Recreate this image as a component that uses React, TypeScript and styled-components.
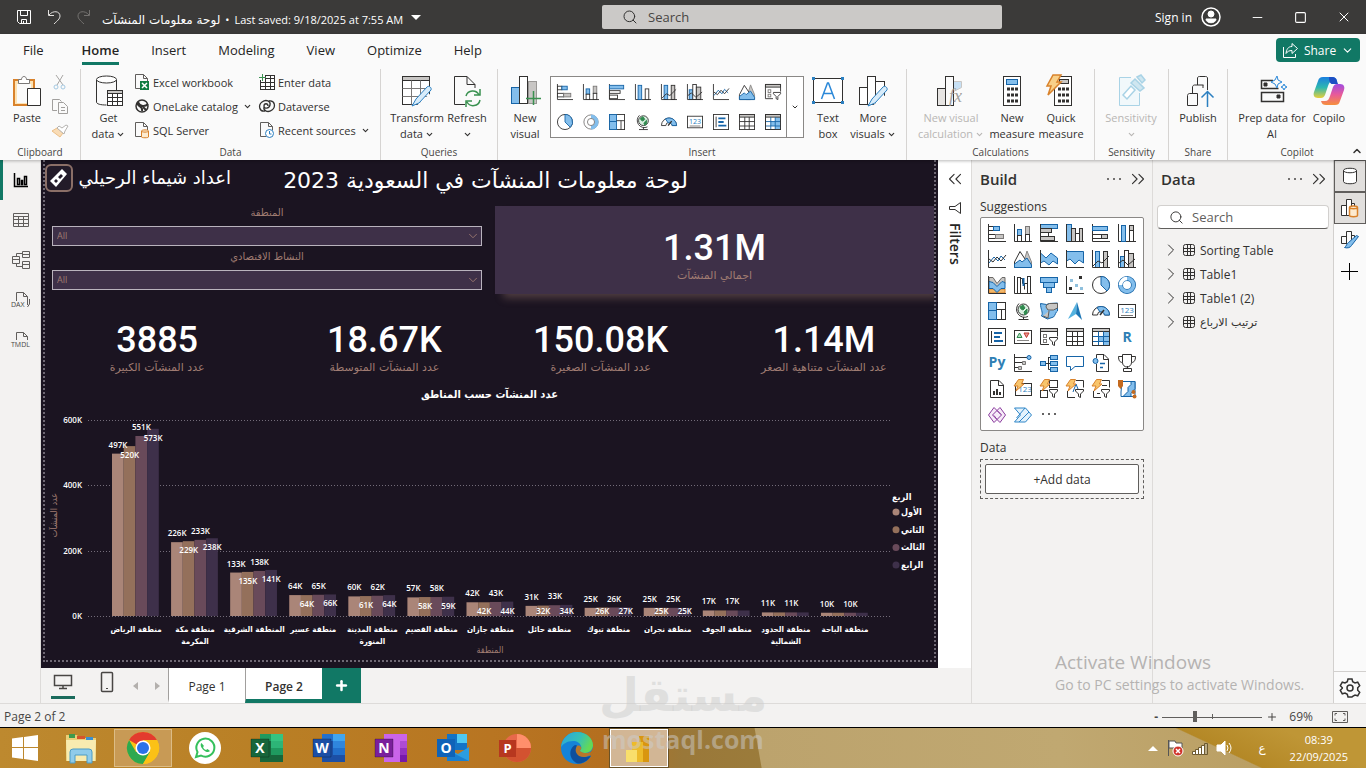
import React from 'react';
import styled, { createGlobalStyle, css } from 'styled-components';
import {
  ChevronDown, ChevronRight, ChevronUp, ChevronsLeft, ChevronsRight, Minus, Plus, Search, Square, X,
} from 'lucide-react';

const SANS = '"Open Sans", "Noto Sans", "DejaVu Sans", sans-serif';
const ARABIC = '"DejaVu Sans", "Open Sans", sans-serif';
const NARROW = '"DejaVu Sans Condensed", "DejaVu Sans", sans-serif';
const INK = '#323130';
const TEAL = '#117865';
const SKY = '#83beec';
const BLUE = '#1664a7';
const GREY = '#c8c6c4';
const ORANGE = '#d9822b';
const ROSE = '#a07c72';

const Global = createGlobalStyle`
  *, *::before, *::after { box-sizing: border-box; }
  body { margin: 0; background: #f3f2f1; font-family: ${SANS}; font-size: 12px; color: ${INK}; overflow-x: hidden; }
  button, input, select { font: inherit; color: inherit; margin: 0; }
  button { border: 0; padding: 0; background: none; }
  svg { display: block; flex: none; overflow: visible; }
  h1, h2, p, figure, ul { margin: 0; padding: 0; font-weight: 400; }
`;

/* ---------- icon drawing ---------- */

type Glyph = React.ReactElement;

const box = (x: number, y: number, w: number, h: number, fill = 'none', stroke = INK) => (
  <rect x={x} y={y} width={w} height={h} fill={fill} stroke={stroke} />
);
const axis = <path d="M.5 0v17.5H18" />;
const bolt = <path d="M4.5-.5h5L7.5 4H10L2 11l2-5H0z" fill="#f8c56c" stroke={ORANGE} />;
const funnelMark = <path d="M9.500 9.500h8v1.500L14.500 14v3.500l-2-1V14l-3-3z" fill="#fff" />;

const viz: Record<string, Glyph> = {
  stackedBar: <>{axis}{box(.5, 2.5, 5, 4, '#fff')}{box(5.5, 2.5, 6, 4, SKY, BLUE)}{box(.5, 10.5, 7, 4, '#fff')}{box(7.5, 10.5, 8, 4, GREY, '#7a7877')}</>,
  stackedCol: <>{axis}{box(3.5, 5.5, 4, 6, SKY, BLUE)}{box(3.5, 11.5, 4, 6, '#fff')}{box(11.5, 2.5, 4, 8, GREY, '#7a7877')}{box(11.5, 10.5, 4, 7, '#fff')}</>,
  wideBar: <>{box(.5, .5, 17, 4, SKY, BLUE)}{box(.5, 4.5, 11, 4, GREY)}{box(.5, 8.5, 8, 4, '#fff')}{box(.5, 12.5, 14, 4, GREY)}{axis}</>,
  wideCol: <>{box(.5, .5, 5, 17, SKY, BLUE)}{box(5.5, 4.5, 4, 13, GREY)}{box(9.5, 9.5, 4, 8, '#fff')}{box(13.5, 4.5, 3, 13, GREY)}{axis}</>,
  bar: <>{axis}{box(.5, 1.5, 16, 4, SKY, BLUE)}{box(.5, 7.5, 12, 3, '#fff')}{box(.5, 12.5, 9, 4, '#fff')}</>,
  col: <>{axis}{box(3.5, 1.5, 4, 16, SKY, BLUE)}{box(11.5, 5.5, 4, 12, '#fff')}</>,
  bar100: <>{axis}{box(.5, 2.5, 15, 4, SKY, BLUE)}{box(.5, 10.5, 9, 4, '#fff')}{box(9.5, 10.5, 6, 4, GREY)}</>,
  col100: <>{axis}{box(3.5, 1.5, 4, 16, SKY, BLUE)}{box(11.5, 1.5, 4, 5, GREY)}{box(11.5, 6.5, 4, 11, '#fff')}</>,
  line: <>{axis}<path d="M1 13l5-6 4 4 3-5 4 4" stroke={BLUE} /><path d="M1 9l4 3 4-5 4 4 5-6" /></>,
  area: <><path d="M13 1l4.500 11v5.500H8z" fill={GREY} stroke="#8a8886" /><path d="M.5 12L6 1.500 13 12v5.500H.5z" fill="#fff" /><path d="M.5 17.500V14L6 10l2 2 5-4 4.500 7v2.500z" fill={SKY} stroke={BLUE} /></>,
  stackedArea: <><path d="M.5 3L6 8l5-5 6.500 5v6l-4.500-3-4 4-5-4-3.500 2z" fill={SKY} stroke={BLUE} />{axis}</>,
  area100: <><path d="M.5 1.500h17V13L13 10l-4 4-5-5-3.500 2z" fill={SKY} stroke={BLUE} />{axis}</>,
  lineStackCol: <>{box(3.5, 1.5, 4, 16, SKY, BLUE)}{box(11.5, 1.5, 4, 16, GREY)}<path d="M1 16l5-5 4 2 7-7" />{axis}</>,
  lineClCol: <>{box(2.5, 6.5, 4, 11, SKY, BLUE)}{box(6.5, .5, 4, 17, '#fff')}{box(10.5, 3.5, 5, 14, GREY)}<path d="M1 13l4-3 5 5 7-6" />{axis}</>,
  ribbon: <><path d="M1 13h16v4H1z" fill="#f2b76a" stroke={ORANGE} /><path d="M1 1.500h4l4 6 5-6h3v6l-4 2-4 4-4-2-4-4z" fill={GREY} stroke="#6b6967" /><path d="M1 5.500l4 1 4 4 5-5 3 1v6h-4l-4 4-4-4H1z" fill={SKY} stroke={BLUE} />{axis}</>,
  waterfall: <>{axis}{box(3.5, 1.5, 3, 16, '#fff')}<path d="M6.500 2.500h2v5M8.500 7.500h5M13.500 7.500v10M10.500 7.500v6" />{box(13.5, .5, 3, 17, '#fff')}<path d="M9.500 2v8" stroke={BLUE} strokeWidth="2" /></>,
  funnel: <>{box(.5, 1.5, 17, 5, SKY, BLUE)}{box(3.5, 6.5, 11, 5, SKY, BLUE)}{box(6.5, 11.5, 5, 5, SKY, BLUE)}</>,
  scatter: <>{axis}<g stroke="none"><path d="M4 3h3v3H4zM9 8h3v3H9zM14 11h3v3h-3z" fill="#8fc0dd" /><path d="M13 0h3v3h-3zM3 11h3v3H3z" fill={INK} /></g></>,
  pie: <><circle cx="9" cy="9" r="8.500" fill="#fff" /><path d="M9 .5a8.500 8.500 0 0 1 6 14.500L9 9z" fill={SKY} stroke={BLUE} /></>,
  donut: <><circle cx="9" cy="9" r="6.500" stroke={BLUE} strokeWidth="5" /><circle cx="9" cy="9" r="6.500" stroke={SKY} strokeWidth="3.500" /><path d="M9 2.500A6.500 6.500 0 0 0 2.500 9" stroke="#fff" strokeWidth="3.500" /></>,
  thinDonut: <><circle cx="9" cy="9" r="8" stroke="#7a7877" fill="#fff" /><path d="M9 3a6 6 0 0 1 0 12" stroke={SKY} strokeWidth="5" /><circle cx="9" cy="9" r="4" stroke="#7a7877" fill="#fff" /></>,
  treemap: <>{box(.5, .5, 17, 17, '#fff')}{box(.5, .5, 8, 8, SKY, BLUE)}{box(.5, 8.5, 8, 9, SKY, BLUE)}<path d="M8.500 7.500h9M13.500 7.500v10" /></>,
  map: <><circle cx="9.500" cy="7.500" r="5.500" fill="#d9efe0" /><path d="M6 5l3-2 2 3-2 2-2-1zM10 10l3-3v4l-2 2z" fill="#2f8a4e" stroke="#2f8a4e" /><path d="M5 1.500a8 8 0 0 0 9 13M9.500 15v2.500M4.500 17.500h10" /></>,
  filledMap: <><path d="M.5 1.500l6 1 3-1 8-.5v8c-2 1-2 4-4 6l-6 2-6-3c2-4-1-6-1-12.500z" fill={SKY} stroke={BLUE} /><path d="M6.500 3l3-1.500h8V6l-4 2H8L6 5zM9 9l-1 7-5-2" fill={GREY} stroke="#605e5c" /></>,
  arrow: <g stroke="none"><path d="M11 0L2 17l8-5z" fill="#54b2df" /><path d="M11 0l5 18-6-6z" fill="#1c76b5" /></g>,
  gauge: <><path d="M.5 13a8.500 8.500 0 0 1 17 0h-5a3.500 3.500 0 0 0-7 0z" fill="#fff" /><path d="M5 5.500A8.500 8.500 0 0 1 17.500 13h-5A3.500 3.500 0 0 0 8 10z" fill={SKY} stroke={BLUE} /><path d="M8 13l4-5" strokeWidth="1.500" /></>,
  card: <>{box(.5, 2.5, 17, 13, '#fff')}<text x="9" y="11" textAnchor="middle" fontSize="8" stroke="none" fill="#2b7fc0">123</text><path d="M3 13.500h12" stroke="#7a7877" /></>,
  multiRow: <>{box(.5, .5, 17, 17, '#fff')}<path d="M3.500 3v12" /><path d="M6 5h8M6 9h6M6 13h9" stroke={BLUE} strokeWidth="2" /></>,
  kpi: <>{box(.5, 2.5, 17, 13, '#fff')}<path d="M3 9.500L5.500 5 8 9.500z" fill="#b5dfc0" stroke="#2f8a4e" /><path d="M10 5h5l-2.500 4.500z" fill="#e89a9a" stroke="#c0392b" /><path d="M3 12.500h12" stroke="#8a8886" /></>,
  slicer: <><path d="M9 16.500H.5V.5h17v8" fill="#fff" />{box(.5, .5, 17, 3, GREY)}{box(3.5, 6.5, 3, 3, '#fff', '#7a7877')}{box(3.5, 11.5, 3, 3, '#fff', '#7a7877')}{funnelMark}</>,
  table: <>{box(.5, .5, 17, 17, '#fff')}{box(.5, .5, 17, 3, GREY)}<path d="M.5 8.500h17M.5 13.500h17M6.500 3.500v14M11.500 3.500v14" /></>,
  matrix: <>{box(.5, .5, 17, 17, '#fff')}<path d="M6.500 8.500h11v9h-6v-4h-5z" fill={SKY} stroke="none" /><path d="M11.500 3.500h6v5h-6z" fill={SKY} stroke="none" />{box(.5, .5, 17, 3, GREY)}<path d="M.5 8.500h17M.5 13.500h17M6.500 3.500v14M11.500 3.500v14" stroke={BLUE} />{box(.5, .5, 17, 17)}</>,
  r: <text x="9" y="14" textAnchor="middle" fontSize="14" fontWeight="700" stroke="none" fill="#2f7fb5">R</text>,
  py: <text x="9" y="13" textAnchor="middle" fontSize="14" fontWeight="700" stroke="none" fill="#2f7fb5">Py</text>,
  influencers: <>{axis}<path d="M1 3.500h12M1 8.500h8M1 13.500h4" /><circle cx="15" cy="3.500" r="2" fill={SKY} stroke={BLUE} /><path d="M8.500 7.500h3v3h-3zM4.500 12.500h3v3h-3z" fill={GREY} stroke="#7a7877" /></>,
  decomposition: <><path d="M5.500 9.500h5M8.500 3v12.500M8.500 3.500h2M8.500 15.500h2" />{box(.5, 7.5, 5, 4, SKY, BLUE)}{box(10.5, 1.5, 7, 4, SKY, BLUE)}{box(10.5, 7.5, 7, 4, SKY, BLUE)}{box(10.5, 13.5, 7, 4, SKY, BLUE)}</>,
  qna: <path d="M.5 2.500h17v10H9L4.500 16.500v-4h-4z" fill="#fff" stroke={BLUE} />,
  narrative: <><path d="M4.500 4V.5H12l4.500 4.500v12.500h-12V10M11.500.5v5h5" /><circle cx="3.500" cy="7" r="2.500" fill={SKY} stroke={BLUE} /><path d="M8 9.500h5M8 13.500h3" stroke={BLUE} strokeWidth="1.500" /></>,
  trophy: <path d="M4.500.5h9v8a4 4 0 0 1-9 0zM4.500 2.500h-4c0 4 1.500 6 4 6M13.500 2.500h4c0 4-1.500 6-4 6M9.500 12v3M5.500 17.500v-3h8v3z" fill="#fff" />,
  paginated: <><path d="M2.500.5H11l4.500 4.500v12.500h-13zM10.500.5v5h5" fill="#fff" /><path d="M6 15v-4M9 15V9M12 15v-3" strokeWidth="2" /></>,
  cardBolt: <>{box(1.5, 3.5, 16, 12, '#fff')}<text x="11" y="12" textAnchor="middle" fontSize="8" stroke="none" fill="#2b7fc0">123</text>{bolt}</>,
  slicerBolt: <>{box(9.5, .5, 8, 7)}{box(.5, 10.5, 7, 7)}{bolt}{funnelMark}</>,
  textBolt: <><path d="M10 .5h7.500v7M1.500 11v6.500H9" /><path d="M7 12l3-8 2 5" stroke={BLUE} />{bolt}{funnelMark}</>,
  listBolt: <><path d="M10 .5h7.500v7M1.500 11v6.500H9M10 5.500h5M5 13.500h3" />{bolt}{funnelMark}</>,
  arcgis: <><path d="M4 1.500h13v15H3V12z" fill="#fff" stroke={BLUE} /><path d="M17 1.500h-4v3l-3 3v4l-5 5h8v-3l4-5z" fill={SKY} stroke={BLUE} /><g fill="#c46a1f" stroke="none"><path d="M0 0h5v6L2.500 9 0 6z" /><circle cx="15.500" cy="12" r="2" /><circle cx="16.500" cy="16.500" r="2" /></g></>,
  powerApps: <g stroke="#8a3b9e"><path d="M6 1.500L9 4.500l3-3L17.500 9 12 16.500 9 13.500l-3 3L.5 9z" fill="#f6ebf8" /><path d="M9 4.500L4.500 9 9 13.500 13.500 9zM9 4.500l4 4M9 13.500l-3-4" /></g>,
  powerAutomate: <g stroke="#2f86c8"><path d="M.5 2h11l6 7-6 7H.5l6-7z" fill="#e3f2fc" /><path d="M11 2L2.500 12M15 6L5 16" /></g>,
  more: <g fill={INK} stroke="none"><circle cx="3" cy="8" r="1" /><circle cx="9" cy="8" r="1" /><circle cx="15" cy="8" r="1" /></g>,
};

const VizIcon = ({ name, size = 18 }: { name: string; size?: number }) => (
  <svg width={size} height={size} viewBox="0 0 18 18" fill="none" stroke={INK} aria-hidden="true">{viz[name]}</svg>
);

const Ico = ({ w, h = w, children, stroke = INK }: { w: number; h?: number; children: React.ReactNode; stroke?: string }) => (
  <svg width={w} height={h} viewBox={`0 0 ${w} ${h}`} fill="none" stroke={stroke} aria-hidden="true">{children}</svg>
);

const pencil = <path d="M15 24l-4 7 7-3L30 15c1-2-2-5-4-3z" fill="#d8ecfa" stroke="#2b7fc0" />;

const keypad = (x: number) => [14, 20, 26].map(y => (
  <path key={y} d={`M${x} ${y - 1.5}h3v3h-3zM${x + 4} ${y - 1.5}h3v3h-3zM${x + 8} ${y - 1.5}h3v3h-3z`} fill={INK} stroke="none" />
));

const big: Record<string, Glyph> = {
  paste: <Ico w={32}><path d="M3 5h20v25H3z" fill="#fde3b4" stroke={ORANGE} strokeWidth="2" /><path d="M6 9h14v19H6z" fill="#fafafa" stroke="none" /><path d="M7.500 8.500v-4h3c0-4 5-4 5 0h3v4z" fill="#fff" stroke="#7a7877" /><path d="M16.500 13.500h13v17h-13z" fill="#fff" /></Ico>,
  getData: <Ico w={32}><path d="M3.500 5v22c0 2 4 3 10 3" fill="none" /><path d="M23.500 5v10" /><ellipse cx="13.500" cy="4.500" rx="10" ry="3.500" fill="#fff" />{box(14.5, 15.5, 15, 15, '#fff')}{box(14.5, 15.5, 15, 3, GREY)}<path d="M14.500 22.500h15M14.500 26.500h15M19.500 18.500v12M24.500 18.500v12" /></Ico>,
  transform: <Ico w={32}>{box(1.5, 1.5, 27, 28, '#fff')}{box(1.5, 1.5, 27, 4, GREY)}<path d="M1.500 13.500h27M1.500 21.500h27M10.500 5.500v24M19.500 5.500v24" stroke="#7a7877" /><path d="M14 32L31 17V32z" fill="#fafafa" stroke="none" />{pencil}</Ico>,
  refresh: <Ico w={32}><path d="M14 29.500H3.500v-28H16l8 8V13M16 1.500v8h8" /><g stroke="#3a9150" strokeWidth="1.500"><path d="M15 21a7 7 0 0 1 13-1M29 14v6h-6M29 25a7 7 0 0 1-13 2M15 32v-6h6" /></g></Ico>,
  newVisual: <Ico w={32}>{box(2.5, 12.5, 8, 16, SKY, BLUE)}{box(19.5, 6.5, 8, 22, GREY, '#9a9896')}{box(10.5, 1.5, 8, 27, '#fff')}<path d="M24.500 16v14M17 23.500h15" stroke="#3a9150" strokeWidth="1.500" /></Ico>,
  textBox: <Ico w={32}>{box(1.5, 3.5, 29, 24, '#fff')}<path d="M9.500 24l6-16h1l6 16M11.500 18.500h9" stroke="#2b88d8" strokeWidth="1.500" /><path d="M0 2h3v3H0zM29 2h3v3h-3zM0 26h3v3H0zM29 26h3v3h-3z" fill="#2b7fc0" stroke="none" /></Ico>,
  moreVisuals: <Ico w={32}>{box(2.5, 12.5, 8, 17, '#fff')}{box(18.5, 6.5, 9, 23, '#fff')}{box(10.5, 1.5, 8, 28, '#fff')}<path d="M14 32L32 17V32z" fill="#fafafa" stroke="none" />{pencil}</Ico>,
  visualCalc: <Ico w={32} stroke="#c8c6c4">{box(2.5, 13.5, 8, 17, '#e6e4e2')}<path d="M18.500 6.500h8v6l-8 4z" fill="#c7e0f4" />{box(10.5, 1.5, 8, 29, '#fafafa')}<text x="14" y="27" fontSize="18" fontStyle="italic" fontFamily="Liberation Serif" stroke="none" fill="#a19f9d">fx</text></Ico>,
  measure: <Ico w={32}>{box(7.5, 1.5, 17, 29, '#fff')}{box(10.5, 4.5, 11, 5, SKY, BLUE)}{keypad(11)}</Ico>,
  quick: <Ico w={32}>{box(9.5, 1.5, 17, 29, '#fff')}{box(14.5, 4.5, 9, 4, GREY)}{keypad(13)}<path d="M8 0h8l-4 7h4L3 20l3-9H2z" fill="#f8d089" stroke={ORANGE} strokeWidth="1.500" /></Ico>,
  sensitivity: <Ico w={32} stroke="#a9d3e6"><path d="M16 2.500H4.500v28h20V18" fill="#f1f8fb" /><path d="M8 20l8-9 4 4-8 9z" fill="#fff" strokeWidth="1.500" /><path d="M16 8l4-4 9 9-4 3zM22 2l4-2 4 5-3 3z" fill="#cfe6f0" strokeWidth="1.500" /></Ico>,
  publish: <Ico w={32}><path d="M15 30.500H5.500v-10c0-1 1-2 2-2h8v12M10.500 18v-6c0-1 1-2 2-2h9M15.500 10V3c0-1 1-1.500 2-1.500h6c1 0 2 .5 2 1.500v12M21 13v-3" /><path d="M25.500 32V16.500M19.500 22.500l6-6 6 6" stroke="#2b7fc0" strokeWidth="1.500" /></Ico>,
  prep: <Ico w={32}><path d="M17 5.500H5.500v8h17M27.500 17.500h-22v9h22z" strokeWidth="1.500" /><path d="M8 8h3v3H8zM21 20h3v3h-3z" fill={INK} /><path d="M21 1l1 4 4 2-4 2-1 4-2-4-4-2 4-2z" fill="#fafafa" stroke="#2b88d8" /><path d="M28 9l1 2 2 1-2 1-1 2-1-2-2-1 2-1z" stroke="#2b88d8" /></Ico>,
  copilot: (
    <svg width="32" height="32" viewBox="0 0 32 32" aria-hidden="true">
      <defs>
        <linearGradient id="cpA" x1="0" y1="0" x2="0" y2="1"><stop offset="0" stopColor="#1b7fe0" /><stop offset=".5" stopColor="#2db8b0" /><stop offset="1" stopColor="#e8cf3a" /></linearGradient>
        <linearGradient id="cpB" x1="0" y1="0" x2="0" y2="1"><stop offset="0" stopColor="#a04be0" /><stop offset=".5" stopColor="#e85a9a" /><stop offset="1" stopColor="#f6903c" /></linearGradient>
      </defs>
      <path d="M10 2h9c3 0 4 1 5 4h-4c-3 0-4 2-5 5l-3 9c-1 2-2 3-4 3H5c-4 0-5-3-4-6l4-11c1-3 2-4 5-4z" fill="url(#cpA)" />
      <path d="M22 30h-9c-3 0-4-1-5-4h4c3 0 4-2 5-5l3-9c1-2 2-3 4-3h3c4 0 5 3 4 6l-4 11c-1 3-2 4-5 4z" fill="url(#cpB)" />
      <path d="M16 2h3c3 0 4 1 5 4l1 3h-6c-1 0-3-1-3-7z" fill="#1c4fc4" />
    </svg>
  ),
};

const sheet = <path d="M7 14.500H1.500V.5h8l4 4V8M9.500.5v4h4" stroke="#605e5c" />;
const small: Record<string, Glyph> = {
  excel: <Ico w={16}>{sheet}<path d="M6 7h9v9H6z" fill="#107c41" stroke="none" /><path d="M8 9l5 5M13 9l-5 5" stroke="#fff" strokeWidth="1.500" /></Ico>,
  onelake: <Ico w={16}><circle cx="8" cy="8" r="6" strokeWidth="1.500" /><path d="M3 5c2 5 6 3 5 8M4 4c2 5 7 5 10 2M9 9l3 3" strokeWidth="2" /></Ico>,
  sql: <Ico w={16}>{sheet}<path d="M7.500 9v6c0 1 7 1 7 0V9c0-1.500-7-1.500-7 0zc0 1.500 7 1.500 7 0" fill="#fdebd0" stroke={ORANGE} /></Ico>,
  enter: <Ico w={16}>{box(1.5, 1.5, 14, 14, '#fff')}<path d="M1.500 4.500h14M1.500 8.500h14M1.500 12.500h14M6.500 1.500v14M11.500 1.500v14" /><path d="M0 0h6v6H0z" fill="#fafafa" stroke="none" /><path d="M3.500 0v7M0 3.500h7" stroke="#3a9150" /></Ico>,
  dataverse: <Ico w={16}><path d="M6 13c-6 1-7-6-3-9s9-1 8 3-6 4-6 1 4-3 4 0M10 3c6-1 7 6 3 9s-9 1-8-3" strokeWidth="1.300" /></Ico>,
  recent: <Ico w={16}>{sheet}<circle cx="10.500" cy="11.500" r="4" fill="#fff" stroke="#2b7fc0" /><path d="M10.500 9v3h2" stroke="#2b7fc0" /></Ico>,
  cut: <Ico w={16} stroke="#a8a6a4"><path d="M4 1l7 10M11 1L5 11" /><circle cx="4" cy="13" r="2" stroke="#a5c9e2" /><circle cx="11" cy="13" r="2" stroke="#a5c9e2" /></Ico>,
  copy: <Ico w={16} stroke="#a19f9d"><path d="M5 12.500H.5v-11h7l2 2M6.500 4.500h5l4 4v7h-9zM9 9.500h4M9 12.500h4" /></Ico>,
  painter: <Ico w={16} stroke="#b5b3b0"><path d="M0 9l8 6 3-4-6-5z" fill="#f9dcb6" stroke="#ecbf87" /><path d="M5 6l7 6 1-3 3-5-2-1-4 3-3-2z" fill="#fff" /></Ico>,
};

/* ---------- title bar ---------- */

const Shell = styled.div`min-height: 100vh; display: flex; flex-direction: column; position: relative;`;

const TitleBar = styled.header`
  height: 34px; background: #3b3a39; color: #fff;
  display: grid; grid-template-columns: 602fr 400fr 364fr; align-items: center;
`;
const TitleLeft = styled.div`display: flex; align-items: center; gap: 14px; padding-left: 16px; white-space: nowrap;`;
const DocName = styled.button`
  display: flex; align-items: center; gap: 5px; font-size: 11px; line-height: 16px; padding-top: 6px; margin-left: -4px;
  bdi { font-family: ${ARABIC}; font-size: 12px; }
`;
const Caret = styled.span`border: 5px solid transparent; border-top-color: #fff; border-bottom: 0; margin-left: 3px; margin-top: -6px;`;
const TopSearch = styled.label`
  height: 24px; background: #cbc9c7; color: ${INK}; display: flex; align-items: center; gap: 8px; padding-left: 20px; border-radius: 2px;
  input { flex: 1; min-width: 0; border: 0; outline: 0; background: none; font-size: 13px; }
  input::placeholder { color: #484644; opacity: 1; }
`;
const TitleRight = styled.div`
  display: flex; align-items: center; justify-content: flex-end; padding-right: 14px; font-size: 12px;
  button { display: flex; align-items: center; gap: 9px; white-space: nowrap; }
  button + button { margin-left: 29px; }
`;
const IconButton = styled.button`display: flex; align-items: center; justify-content: center;`;

/* ---------- ribbon ---------- */

const Ribbon = styled.section`background: #fafafa; position: relative; z-index: 2; box-shadow: 0 1px 3px rgba(0, 0, 0, .28);`;
const TabRow = styled.nav`height: 32px; display: flex; align-items: center; padding: 0 6px 0 7px;`;
const Tab = styled.button<{ $on?: boolean }>`
  height: 32px; padding: 0 16px; font-size: 13px; display: flex; align-items: center; color: #252423;
  ${p => p.$on && css`font-weight: 600; margin-left: 6px;`}
  span { border-bottom: 3px solid ${p => (p.$on ? TEAL : 'transparent')}; line-height: 24px; margin-top: 2px; }
`;
const ShareButton = styled.button`
  margin-left: auto; width: 84px; height: 24px; background: ${TEAL}; color: #fff; border-radius: 4px;
  display: flex; align-items: center; justify-content: center; gap: 5px; font-size: 12px;
`;
const Groups = styled.div`display: flex; height: 94px; padding-top: 3px;`;
const Group = styled.div<{ $w?: number }>`
  ${p => (p.$w ? `flex: 0 0 ${p.$w}px;` : 'flex: 1 0 0; min-width: 0;')}
  display: flex; flex-direction: column; border-right: 1px solid #d6d4d2; position: relative;
  &:last-child { border-right: 0; }
`;
const GroupBody = styled.div<{ $pad?: number }>`display: flex; height: 76px; padding: 1px 0 0 ${p => p.$pad || 0}px; align-items: flex-start;`;
const GroupName = styled.div`text-align: center; font-size: 10px; line-height: 16px; color: #484644;`;
const Tool = styled.button<{ $w: number; $off?: boolean }>`
  flex: 0 0 ${p => p.$w}px; padding-top: 5px; display: flex; flex-direction: column; align-items: center;
  font-size: 11px; line-height: 16px; color: ${p => (p.$off ? '#b8b6b4' : INK)}; white-space: nowrap;
  svg + span { margin-top: 3px; }
  span { display: flex; align-items: center; gap: 2px; min-height: 16px; }
`;
const ToolColumn = styled.div<{ $w?: number }>`display: flex; flex-direction: column; width: ${p => p.$w || 20}px;`;
const RowTool = styled.button`
  height: 24px; display: flex; align-items: center; gap: 3px; font-size: 11px; color: ${INK}; white-space: nowrap;
  svg:last-child:not(:first-child) { margin-left: 2px; }
`;
const Gallery = styled.div`
  display: flex; border: 1px solid #8a8886; background: #fff; margin: 6px 8px 0 7px; height: 62px; width: 254px;
`;
const GalleryGrid = styled.div`flex: 1; display: grid; grid-template-columns: repeat(9, 1fr); grid-template-rows: 30px 30px; padding-left: 1px;`;
const GalleryMore = styled(IconButton)`width: 17px; border-left: 1px solid #8a8886;`;
const Collapse = styled(IconButton)`position: absolute; right: 3px; bottom: 3px;`;

type ToolDef = { icon: string; a: string; b?: string; w: number; off?: boolean; arrow?: boolean };
const BigTool = ({ icon, a, b, w, off, arrow }: ToolDef) => (
  <Tool $w={w} $off={off} disabled={off}>
    {big[icon]}
    <span>{a}</span>
    {(b || arrow) && <span>{b}{arrow && <ChevronDown size={9} strokeWidth={3} />}</span>}
  </Tool>
);
const SmallTool = ({ icon, text, arrow }: { icon: string; text: string; arrow?: boolean }) => (
  <RowTool>{small[icon]}{text}{arrow && <ChevronDown size={9} strokeWidth={3} />}</RowTool>
);

const ribbonGallery = [
  'stackedBar', 'stackedCol', 'bar', 'col', 'lineStackCol', 'lineClCol', 'line', 'area', 'slicer',
  'pie', 'thinDonut', 'treemap', 'map', 'gauge', 'card', 'multiRow', 'table', 'matrix',
];

/* ---------- work area ---------- */

const Work = styled.main`flex: 1; display: flex; min-height: 543px;`;
const LeftRail = styled.nav`width: 41px; flex: none; background: #f3f2f1; border-right: 1px solid #dddbd9; display: flex; flex-direction: column;`;
const RailButton = styled.button<{ $on?: boolean }>`
  height: 40px; display: flex; align-items: center; justify-content: center;
  border-left: 3px solid ${p => (p.$on ? TEAL : 'transparent')}; padding-right: 2px;
`;
const Stage = styled.div`flex: 1; min-width: 0; display: flex; flex-direction: column;`;
const StageTop = styled.div`flex: 1; display: flex;`;
const Canvas = styled.section`flex: 1; min-width: 0; background: #1b1421; padding: 0 2px 6px;`;
const Report = styled.div`border: 2px dotted #6f6874; border-top: 0; height: 100%; overflow: hidden; color: #fff; font-family: ${ARABIC};`;

const ReportHead = styled.div`height: 46px; padding: 4px 0 0; display: grid; grid-template-columns: 36px 150px 457px 1fr;`;
const Badge = styled.div`
  width: 28px; height: 28px; border: 2px solid #8b6f67; border-radius: 6px; background: #231b29; display: grid; place-items: center;
`;
const Author = styled.p`font-size: 18px; line-height: 28px; white-space: nowrap;`;
const ReportTitle = styled.h1`font-size: 22px; line-height: 34px; white-space: nowrap;`;

const TopBand = styled.div`display: grid; grid-template-columns: 430fr 439fr; column-gap: 13px; padding-left: 7px;`;
const Slicers = styled.div`display: flex; flex-direction: column; gap: 4px;`;
const Slicer = styled.label`
  display: block; position: relative; text-align: center; color: ${ROSE}; font-size: 10px; line-height: 14px;
  select {
    appearance: none; display: block; width: 100%; height: 20px; margin-top: 6px; padding: 0 4px; border: 1px solid #b9b3bd; border-radius: 0;
    background: #3e3048; color: ${ROSE}; font-family: ${SANS}; font-size: 9px;
  }
  svg { position: absolute; right: 2px; bottom: 3px; }
`;
const Total = styled.div`background: #3e3048; height: 88px; padding-top: 22px; box-shadow: 6px 6px 8px -2px rgba(160, 124, 114, .4);`;
const Figure = styled.div`
  text-align: center; font-size: 11px; line-height: 16px; color: ${ROSE};
  strong { display: block; font-family: Roboto, sans-serif; font-weight: 500; font-size: 36px; line-height: 40px; color: #fff; }
`;
const Figures = styled.div`display: grid; grid-template-columns: 224fr 206fr 202fr 220fr; column-gap: 12px; margin-top: 26px;`;
const ChartBox = styled.figure`
  margin-top: 9px;
  figcaption { text-align: center; font-family: ${NARROW}; font-size: 11px; line-height: 20px; font-weight: 700; }
  svg { width: 100%; height: auto; }
`;

const SERIES = ['#aa8578', '#94705b', '#694a5a', '#3e304a'];
const QUARTERS = ['الأول', 'الثاني', 'الثالث', 'الرابع'];
const REGIONS: { name: string[]; v: number[] }[] = [
  { name: ['منطقة الرياض'], v: [497, 520, 551, 573] },
  { name: ['منطقة مكة', 'المكرمة'], v: [226, 229, 233, 238] },
  { name: ['المنطقة الشرقية'], v: [133, 135, 138, 141] },
  { name: ['منطقة عسير'], v: [64, 64, 65, 66] },
  { name: ['منطقة المدينة', 'المنورة'], v: [60, 61, 62, 64] },
  { name: ['منطقة القصيم'], v: [57, 58, 58, 59] },
  { name: ['منطقة جازان'], v: [42, 42, 43, 44] },
  { name: ['منطقة حائل'], v: [31, 32, 33, 34] },
  { name: ['منطقة تبوك'], v: [25, 26, 26, 27] },
  { name: ['منطقة نجران'], v: [25, 25, 25, 25] },
  { name: ['منطقة الجوف'], v: [17, 17, 17, 17] },
  { name: ['منطقة الحدود', 'الشمالية'], v: [11, 11, 11, 11] },
  { name: ['منطقة الباحة'], v: [10, 10, 10, 10] },
];

const BASE = 211;
const yOf = (k: number) => BASE - k * 0.3267;

const RegionChart = () => (
  <svg viewBox="0 0 889 255" fontFamily={NARROW} role="img" aria-label="عدد المنشآت حسب المناطق">
    {[600, 400, 200, 0].map(k => (
      <g key={k}>
        <path d={`M43 ${Math.round(yOf(k)) + .5}H847`} stroke="#736c79" strokeDasharray="1 2" />
        <text x="37" y={yOf(k) + 3} textAnchor="end" fontSize="8" fontWeight="600" fontFamily={SANS} fill="#fff">{k}K</text>
      </g>
    ))}
    {REGIONS.map((r, i) => {
      const x0 = 67 + i * 59.08;
      return (
        <g key={i}>
          {r.v.map((v, j) => (
            <rect key={j} x={x0 + j * 11.7} y={yOf(v)} width="11.700" height={BASE - yOf(v)} fill={SERIES[j]} />
          ))}
          {r.v.map((v, j) => {
            const inside = j % 2 === 1;
            if (inside && v < 20) return null;
            const cy = inside ? Math.min(yOf(v) + 9, BASE - 5) : yOf(v) - 9;
            return (
              <text key={j} x={x0 + j * 11.7 + 6} y={cy + 3} textAnchor="middle" fontSize="8" fontWeight="600" fontFamily={SANS} fill="#fff">{v}K</text>
            );
          })}
          {r.name.map((line, j) => (
            <text key={j} x={x0 + 24} y={227 + j * 12} textAnchor="middle" fontSize="8" fontWeight="700" fill="#fff">{line}</text>
          ))}
        </g>
      );
    })}
    <text x="445" y="248" textAnchor="middle" fontSize="9" fill={ROSE}>المنطقة</text>
    <text transform="translate(12 110) rotate(-90)" textAnchor="middle" fontSize="9" fill={ROSE}>عدد المنشآت</text>
    <text x="847" y="95" fontSize="9" fontWeight="700" fill="#fff">الربع</text>
    {QUARTERS.map((q, i) => (
      <g key={q}>
        <circle cx="851" cy={107 + i * 17.7} r="3.500" fill={SERIES[i]} />
        <text x="856" y={110 + i * 17.7} fontSize="9" fontWeight="700" fill="#fff">{q}</text>
      </g>
    ))}
  </svg>
);

const FiltersPane = styled.aside`
  width: 33px; flex: none; background: #fff; display: flex; flex-direction: column; align-items: center; padding-top: 8px; gap: 11px;
  span { writing-mode: vertical-rl; font-size: 14px; font-weight: 600; line-height: 18px; color: #252423; margin-top: -3px; }
`;

const PageBar = styled.div`height: 35px; background: #f3f2f1; display: flex; align-items: stretch; padding-left: 10px;`;
const ViewMode = styled.button<{ $on?: boolean }>`
  width: 24px; display: flex; justify-content: center; align-items: center; margin-bottom: 4px;
  border-bottom: 3px solid ${p => (p.$on ? '#1a6b5c' : 'transparent')};
  & + & { margin: 0 5px 4px 20px; }
`;
const Arrow = styled.button<{ $next?: boolean }>`
  width: 22px; display: grid; place-items: center;
  &::after { content: ''; border: 4px solid transparent; ${p => (p.$next ? 'border-left: 5px solid #b3b0ad; border-right: 0;' : 'border-right: 5px solid #b3b0ad; border-left: 0;')} }
`;
const PageTab = styled.button<{ $on?: boolean }>`
  width: 77px; background: #fff; border-left: 1px solid #a19f9d; font-size: 12px; padding-top: 6px;
  border-bottom: 4px solid ${p => (p.$on ? TEAL : '#fff')}; font-weight: ${p => (p.$on ? 600 : 400)};
`;
const AddPage = styled(IconButton)`width: 39px; background: ${TEAL}; color: #fff;`;

const Pane = styled.aside`width: 181px; flex: none; border-left: 1px solid #dddbd9; padding: 8px 8px 0; background: #f3f2f1; display: flex; flex-direction: column;`;
const PaneHead = styled.div`
  display: flex; align-items: center; height: 22px; gap: 5px; margin-right: -5px;
  h2 { flex: 1; font-size: 15px; font-weight: 600; line-height: 22px; }
`;
const PaneLabel = styled.p`font-size: 12px; line-height: 18px; margin: 8px 0 2px;`;
const Shelf = styled.div`
  border: 1px solid #8a8886; border-radius: 2px; background: #fff; padding: 2px 3px; display: grid;
  grid-template-columns: repeat(6, 1fr); grid-auto-rows: 26px; margin-top: -1px;
`;
const DropZone = styled.div`border: 1px dashed #605e5c; padding: 4px; height: 40px;`;
const AddData = styled.button`width: 100%; height: 30px; background: #fff; border: 1px solid #605e5c; border-radius: 2px; font-size: 12px;`;
const PaneSearch = styled.label`
  display: flex; align-items: center; gap: 6px; height: 24px; margin: 15px -4px 0 -4px; padding-left: 11px; background: #fff;
  border: 1px solid #d2d0ce; border-bottom-color: #605e5c; border-radius: 4px;
  input { flex: 1; min-width: 0; border: 0; outline: 0; background: none; font-size: 13px; }
  input::placeholder { color: #605e5c; opacity: 1; }
`;
const Tree = styled.ul`list-style: none; margin-top: 9px;`;
const TreeItem = styled.li`
  height: 24px;
  button { display: flex; align-items: center; height: 24px; gap: 5px; font-size: 12px; white-space: nowrap; }
  svg:first-child { margin-right: -3px; }
  bdi { font-family: ${ARABIC}; font-size: 11px; }
`;
const RightRail = styled.nav`width: 33px; flex: none; border-left: 1px solid #d2d0ce; background: #fafafa; display: flex; flex-direction: column;`;
const PaneSwitch = styled.button<{ $on?: boolean; $end?: boolean }>`
  height: 32px; display: grid; place-items: center;
  ${p => p.$on && 'background: #e1dfdd; border: 1px solid #605e5c;'}
  ${p => p.$end && 'margin-top: auto; border-top: 1px solid #d2d0ce;'}
`;

const DotsIcon = () => <Ico w={16} h={4}><g fill="#484644" stroke="none"><circle cx="2" cy="2" r="1" /><circle cx="8" cy="2" r="1" /><circle cx="14" cy="2" r="1" /></g></Ico>;
const TableIcon = () => <Ico w={12}><rect x=".5" y=".5" width="11" height="11" rx="2" /><path d="M.5 4.500h11M.5 7.500h11M4.500.5v11M7.500.5v11" /></Ico>;

const buildGallery = [
  'stackedBar', 'stackedCol', 'wideBar', 'wideCol', 'bar100', 'col100',
  'line', 'area', 'stackedArea', 'area100', 'lineStackCol', 'lineClCol',
  'ribbon', 'waterfall', 'funnel', 'scatter', 'pie', 'donut',
  'treemap', 'map', 'filledMap', 'arrow', 'gauge', 'card',
  'multiRow', 'kpi', 'slicer', 'table', 'matrix', 'r',
  'py', 'influencers', 'decomposition', 'qna', 'narrative', 'trophy',
  'paginated', 'cardBolt', 'slicerBolt', 'textBolt', 'listBolt', 'arcgis',
  'powerApps', 'powerAutomate', 'more',
];

/* ---------- status bar and taskbar ---------- */

const Status = styled.footer`
  height: 25px; border-top: 1px solid #dddbd9; border-bottom: 1px solid #000; background: #f3f2f1; color: #484644;
  display: flex; align-items: center; padding: 2px 18px 0 4px;
  span { flex: 1; }
`;
const Zoom = styled.div`
  display: flex; align-items: center; gap: 4px;
  output { width: 24px; margin: 0 15px 0 7px; text-align: right; }
  input {
    appearance: none; width: 100px; height: 12px; margin: 0;
    background: linear-gradient(#605e5c, #605e5c) 50% 6px / 100% 1px no-repeat, linear-gradient(#605e5c, #605e5c) 50% 50% / 1px 5px no-repeat;
  }
  input::-webkit-slider-thumb { appearance: none; width: 4px; height: 11px; background: #605e5c; }
`;

const TaskBar = styled.footer`
  height: 40px; display: flex; align-items: center; color: #fff;
  background:
    linear-gradient(25deg, transparent 33%, #b48826 34%, #bf9636 70%) right / 200px 100% no-repeat,
    linear-gradient(80deg, transparent 8px, #bca36d 9px, #c0a871 50%, #b79a5c) right / 613px 100% no-repeat,
    linear-gradient(90deg, #bd892f, #b97f25 20%, #b87522 36%, #b46f1f 44%, #9a7839 50%, #9c7e3c 60%);
`;
const Task = styled.button<{ $w?: number; $on?: 'soft' | 'strong' }>`
  width: ${p => p.$w || 62}px; height: 40px; padding: 1px 2px; display: flex;
  span {
    flex: 1; display: grid; place-items: center; border: 1px solid transparent;
    ${p => p.$on === 'soft' && 'background: #c89a55; border-color: #dcbc85;'}
    ${p => p.$on === 'strong' && 'background: #d2b695; border-color: #fff; outline: 1px solid #6b5226;'}
  }
`;
const Tray = styled.div`margin-left: auto; display: flex; align-items: center; gap: 8px; padding-right: 18px;`;
const Lang = styled.span`font-family: ${ARABIC}; font-size: 12px; margin: 0 16px;`;
const Clock = styled.time`text-align: center; font-size: 11px; line-height: 17px;`;

const Office = ({ letter, dark, mid, light, pale }: { letter: string; dark: string; mid: string; light: string; pale: string }) => (
  <svg width="32" height="32" viewBox="0 0 32 32" aria-hidden="true">
    <path d="M9 2h11v7H9z" fill={mid} /><path d="M20 2h12v7H20z" fill={pale} />
    <path d="M9 9h11v7H9z" fill={dark} /><path d="M20 9h12v7H20z" fill={light} />
    <path d="M9 16h11v7H9zM9 23h23v7H9z" fill={dark} /><path d="M20 16h12v7H20z" fill={mid} />
    <path d="M0 7h18v18H0z" fill={dark} stroke="rgba(0,0,0,.25)" />
    <text x="9" y="21" textAnchor="middle" fontSize="14" fontWeight="700" fill="#fff" fontFamily="Open Sans">{letter}</text>
  </svg>
);

const tasks: { name: string; w?: number; on?: 'soft' | 'strong'; art: Glyph }[] = [
  { name: 'Start', w: 50, art: <Ico w={28} stroke="none"><path d="M1 4.500l11-1.500v10H1zM13 3l14-2v12H13zM1 14h11v11L1 23.500zM13 14h14v13l-14-2z" fill="#fff" /></Ico> },
  { name: 'File Explorer', art: <Ico w={32} stroke="none"><path d="M1 3h11l2 3h17v23H1z" fill="#e9cf78" /><path d="M4 2h6v4H4z" fill="#3f9a4d" /><path d="M12 4h8v3h-8z" fill="#d6542b" /><path d="M21 5h7v3h-7z" fill="#3a8fd0" /><path d="M1 8h30l-1 21H2z" fill="#f8ebb0" /><path d="M5 31V20q0-3 3-3h16q3 0 3 3v11h-5v-8H10v8z" fill="#8fcbea" stroke="#4d9cc4" /></Ico> },
  { name: 'Chrome', on: 'soft', art: <Ico w={32} stroke="none"><circle cx="16" cy="16" r="16" fill="#fbc116" /><path d="M16 16L2.100 8A16 16 0 0 1 29.900 8H16z" fill="#e33b2e" /><path d="M2.100 8A16 16 0 0 0 16 32l7-12-14 0z" fill="#2da94f" /><path d="M16 8h14A16 16 0 0 1 16 32l7-12z" fill="#fbc116" /><circle cx="16" cy="16" r="7.500" fill="#fff" /><circle cx="16" cy="16" r="6" fill="#2a72e8" /></Ico> },
  { name: 'WhatsApp', art: <Ico w={32} stroke="none"><circle cx="16" cy="16" r="16" fill="#fff" /><path d="M7 25l1.500-5A9 9 0 1 1 12 23.500z" stroke="#35c05c" strokeWidth="2" /><path d="M12.500 11c-2 2 0 5 2 7s5 3 6.500 1l-2.500-2-1.500 1c-1.500-.5-2.500-1.500-3-3l1-1z" fill="#35c05c" /></Ico> },
  { name: 'Excel', art: <Office letter="X" dark="#17663b" mid="#1f9a5f" light="#2db577" pale="#35c481" /> },
  { name: 'Word', art: <Office letter="W" dark="#1c4fa5" mid="#2270cc" light="#2f86dd" pale="#41a5ee" /> },
  { name: 'OneNote', art: <Ico w={32} stroke="none"><path d="M9 2h23v28H9z" fill="#ca64ea" /><path d="M25 9h7v7h-7z" fill="#ae4bd5" /><path d="M25 16h7v7h-7z" fill="#9332bf" /><path d="M25 23h7v7h-7z" fill="#7719aa" /><path d="M0 7h18v18H0z" fill="#7a1f9c" stroke="rgba(0,0,0,.25)" /><text x="9" y="21" textAnchor="middle" fontSize="14" fontWeight="700" fill="#fff">N</text></Ico> },
  { name: 'Outlook', art: <Ico w={32} stroke="none"><path d="M10 2h20v16H10z" fill="#1373c6" /><path d="M20 2h10v9H20z" fill="#4fc8f2" /><path d="M32 15v14H10V17l11 5z" fill="#2c9de0" /><path d="M10 18l22 11H10z" fill="#1a7fd0" /><path d="M0 7h18v18H0z" fill="#0f63b8" /><text x="9" y="21" textAnchor="middle" fontSize="14" fontWeight="700" fill="#fff">O</text></Ico> },
  { name: 'PowerPoint', art: <Ico w={32} stroke="none"><circle cx="18" cy="16" r="14" fill="#e8694b" /><path d="M18 2a14 14 0 0 1 14 14H18z" fill="#ff8f6b" /><path d="M4 16h28a14 14 0 0 1-28 0z" fill="#d35230" /><path d="M0 8h17v17H0z" fill="#b7371f" /><text x="8.500" y="21" textAnchor="middle" fontSize="13" fontWeight="700" fill="#fff">P</text></Ico> },
  { name: 'Edge', art: (
    <svg width="32" height="32" viewBox="0 0 32 32" aria-hidden="true">
      <defs><linearGradient id="edge" x1="0" y1="0" x2="1" y2=".4"><stop offset="0" stopColor="#2aa3e0" /><stop offset=".6" stopColor="#35c1b8" /><stop offset="1" stopColor="#63d956" /></linearGradient></defs>
      <path d="M0 16C0 7 7 0 16 0s16 7 16 14c0 5-4 8-8 8l6 2c-3 5-8 8-14 8C7 32 0 25 0 16z" fill="#1583d8" />
      <path d="M0 15C1 6 8 0 16 0c10 0 16 7 16 13 0 5-4 8-8 8-3 0-5-1-5-2s2-2 1-5-4-5-8-5C6 9 2 12 0 15z" fill="url(#edge)" />
      <path d="M14 13c-5 3-6 9-3 14 2 3 5 5 8 4.500 5-1 9-4 11-8-6 3-12 1-14-3-1-3-1-5 0-7z" fill="#0f4f9c" />
      <path d="M16 14c-2 3-2 7 2 10 4 2 8 1 11-1v-3c-3 2-8 1-10-1 0-1 2-2 1-4-1-1-2-2-4-1z" fill="#b8772a" />
    </svg>
  ) },
  { name: 'Power BI', on: 'strong', art: <Ico w={32} stroke="none"><path d="M16 4h10v26H16z" fill="#d9960f" /><path d="M9 10h11v20H9z" fill="#edbb2a" /><path d="M3 18h11v12H3z" fill="#f9df6b" /></Ico> },
];

/* ---------- overlays ---------- */

const Activation = styled.div`
  position: absolute; right: 55px; bottom: 73px; width: 256px; color: #b5b3b1; pointer-events: none; white-space: nowrap; z-index: 3;
  p:first-child { font-size: 19px; line-height: 26px; }
  p:last-child { font-size: 14px; line-height: 20px; }
`;
const Watermark = styled.div`
  position: absolute; left: 50%; bottom: 12px; transform: translateX(-50%); text-align: center; color: rgba(204, 204, 204, .5); font-weight: 700;
  pointer-events: none; z-index: 3; white-space: nowrap;
  bdi { display: block; font-family: ${ARABIC}; font-size: 46px; line-height: 54px; }
  span { display: block; font-size: 25px; line-height: 34px; }
`;

export default function App() {
  return (
    <Shell>
      <Global />
      <TitleBar>
        <TitleLeft>
          <IconButton aria-label="Save"><Ico w={16} stroke="#fff"><path d="M1.500 1.500h13v13h-11l-2-2zM4.500 1.500v5h7v-5M5.500 14.500v-4h5v4M7.500 12v2" /></Ico></IconButton>
          <IconButton aria-label="Undo"><Ico w={16} stroke="#e1dfdd"><path d="M2.500 1v5.500H8M3 6c4-5 11-4 11 1 0 3-3 5-6 8" /></Ico></IconButton>
          <IconButton aria-label="Redo"><Ico w={16} stroke="#73716f"><path d="M13.500 1v5.500H8M13 6C9 1 2 2 2 7c0 3 3 5 6 8" /></Ico></IconButton>
          <DocName>
            <bdi>لوحة معلومات المنشآت</bdi><span>•</span><span>Last saved: 9/18/2025 at 7:55 AM</span><Caret />
          </DocName>
        </TitleLeft>
        <TopSearch><Search size={16} strokeWidth={1.500} /><input placeholder="Search" aria-label="Search" /></TopSearch>
        <TitleRight>
          <button>Sign in <Ico w={20} stroke="#fff"><circle cx="10" cy="10" r="9" strokeWidth="1.500" /><circle cx="10" cy="7" r="3" fill="#fff" /><path d="M5 12h10c0 5-10 5-10 0z" fill="#fff" /></Ico></button>
          <button aria-label="Minimize"><Minus size={15} strokeWidth={1.500} /></button>
          <button aria-label="Maximize"><Square size={13} strokeWidth={2} /></button>
          <button aria-label="Close"><X size={16} strokeWidth={1.500} /></button>
        </TitleRight>
      </TitleBar>

      <Ribbon>
        <TabRow>
          {['File', 'Home', 'Insert', 'Modeling', 'View', 'Optimize', 'Help'].map(t => (
            <Tab key={t} $on={t === 'Home'}><span>{t}</span></Tab>
          ))}
          <ShareButton>
            <Ico w={17} stroke="#fff"><path d="M1.500 5v10.500h12V12M10 1.500l5.500 5-5.500 5v-3c-3 0-4.500 1-6 3 .5-4 2-7 6-7z" /></Ico>
            Share <ChevronDown size={13} />
          </ShareButton>
        </TabRow>
        <Groups>
          <Group $w={81}>
            <GroupBody $pad={2}>
              <BigTool icon="paste" a="Paste" w={50} />
              <ToolColumn>
                <RowTool aria-label="Cut">{small.cut}</RowTool>
                <RowTool aria-label="Copy">{small.copy}</RowTool>
                <RowTool aria-label="Format painter">{small.painter}</RowTool>
              </ToolColumn>
            </GroupBody>
            <GroupName>Clipboard</GroupName>
          </Group>
          <Group $w={300}>
            <GroupBody $pad={2}>
              <BigTool icon="getData" a="Get" b="data" arrow w={51} />
              <ToolColumn $w={125}>
                <SmallTool icon="excel" text="Excel workbook" />
                <SmallTool icon="onelake" text="OneLake catalog" arrow />
                <SmallTool icon="sql" text="SQL Server" />
              </ToolColumn>
              <ToolColumn $w={120}>
                <SmallTool icon="enter" text="Enter data" />
                <SmallTool icon="dataverse" text="Dataverse" />
                <SmallTool icon="recent" text="Recent sources" arrow />
              </ToolColumn>
            </GroupBody>
            <GroupName>Data</GroupName>
          </Group>
          <Group $w={117}>
            <GroupBody $pad={8}>
              <BigTool icon="transform" a="Transform" b="data" arrow w={56} />
              <BigTool icon="refresh" a="Refresh" arrow w={44} />
            </GroupBody>
            <GroupName>Queries</GroupName>
          </Group>
          <Group $w={409}>
            <GroupBody $pad={9}>
              <BigTool icon="newVisual" a="New" b="visual" w={36} />
              <Gallery>
                <GalleryGrid>
                  {ribbonGallery.map(n => <IconButton key={n} aria-label={n}><VizIcon name={n} size={16} /></IconButton>)}
                </GalleryGrid>
                <GalleryMore aria-label="More visuals"><ChevronDown size={8} strokeWidth={3} /></GalleryMore>
              </Gallery>
              <BigTool icon="textBox" a="Text" b="box" w={32} />
              <BigTool icon="moreVisuals" a="More" b="visuals" arrow w={58} />
            </GroupBody>
            <GroupName>Insert</GroupName>
          </Group>
          <Group $w={188}>
            <GroupBody $pad={8}>
              <BigTool icon="visualCalc" a="New visual" b="calculation" arrow off w={72} />
              <BigTool icon="measure" a="New" b="measure" w={50} />
              <BigTool icon="quick" a="Quick" b="measure" w={48} />
            </GroupBody>
            <GroupName>Calculations</GroupName>
          </Group>
          <Group $w={74}>
            <GroupBody $pad={6}><BigTool icon="sensitivity" a="Sensitivity" arrow off w={60} /></GroupBody>
            <GroupName>Sensitivity</GroupName>
          </Group>
          <Group $w={59}>
            <GroupBody $pad={4}><BigTool icon="publish" a="Publish" w={50} /></GroupBody>
            <GroupName>Share</GroupName>
          </Group>
          <Group>
            <GroupBody $pad={8}>
              <BigTool icon="prep" a="Prep data for" b="AI" w={72} />
              <BigTool icon="copilot" a="Copilo" w={42} />
            </GroupBody>
            <GroupName>Copilot</GroupName>
            <Collapse aria-label="Collapse ribbon"><ChevronUp size={12} strokeWidth={3} /></Collapse>
          </Group>
        </Groups>
      </Ribbon>

      <Work>
        <LeftRail>
          <RailButton $on aria-label="Report view"><Ico w={16}><path d="M1.500 1v13.500H15M4.500 6.500h2v6h-2zM8.500 8.500h1v4h-1zM11.500 4.500h2v8h-2z" stroke="#000" strokeWidth="1.500" /></Ico></RailButton>
          <RailButton aria-label="Table view"><Ico w={18} h={16} stroke="#605e5c"><path d="M1.500 1.500h15v13h-15zM1.500 4.500h15M1.500 7.500h15M1.500 11.500h15M6.500 4v10.500M11.500 4v10.500" /></Ico></RailButton>
          <RailButton aria-label="Model view"><Ico w={20} stroke="#605e5c"><path d="M1.500 6.500h7v7h-7zM1.500 9.500h7M11.500 1.500h7v6h-7zM11.500 4.500h7M11.500 11.500h7v7h-7zM11.500 14.500h7M5.500 6.500v-3h6M5.500 13.500v3h6" /></Ico></RailButton>
          <RailButton aria-label="DAX query view"><Ico w={20} stroke="#605e5c"><path d="M5.500 11V2.500h7l4 4V15M12.500 2.500v4h4M18.500 9v5l-2 3" /><text x="0" y="17" fontSize="7" stroke="none" fill="#484644">DAX</text></Ico></RailButton>
          <RailButton aria-label="TMDL view"><Ico w={20} stroke="#605e5c"><path d="M5.500 10V2.500h7l4 4V10M12.500 2.500v4h4" /><text x="0" y="17" fontSize="7" stroke="none" fill="#484644">TMDL</text></Ico></RailButton>
        </LeftRail>

        <Stage>
          <StageTop>
            <Canvas>
              <Report>
                <ReportHead>
                  <Badge><Ico w={20} stroke="none"><path d="M13 1l5 5-11 13-6-6z" fill="#fff" /><path d="M12 6l2 2-3 3-2-2zM7 11l2 2-2 2-2-2z" fill="#231b29" /></Ico></Badge>
                  <Author dir="rtl">اعداد شيماء الرحيلي</Author>
                  <ReportTitle dir="rtl">لوحة معلومات المنشآت في السعودية 2023</ReportTitle>
                </ReportHead>
                <TopBand>
                  <Slicers>
                    {['المنطقة', 'النشاط الاقتصادي'].map(name => (
                      <Slicer key={name}>
                        {name}
                        <select defaultValue="All"><option>All</option></select>
                        <ChevronDown size={14} strokeWidth={1.500} />
                      </Slicer>
                    ))}
                  </Slicers>
                  <Total><Figure><strong>1.31M</strong>اجمالي المنشآت</Figure></Total>
                </TopBand>
                <Figures>
                  <Figure><strong>3885</strong>عدد المنشآت الكبيرة</Figure>
                  <Figure><strong>18.67K</strong>عدد المنشآت المتوسطة</Figure>
                  <Figure><strong>150.08K</strong>عدد المنشآت الصغيرة</Figure>
                  <Figure><strong>1.14M</strong>عدد المنشآت متناهية الصغر</Figure>
                </Figures>
                <ChartBox>
                  <figcaption>عدد المنشآت حسب المناطق</figcaption>
                  <RegionChart />
                </ChartBox>
              </Report>
            </Canvas>
            <FiltersPane>
              <IconButton aria-label="Expand filters"><ChevronsLeft size={22} strokeWidth={1.200} /></IconButton>
              <Ico w={14}><path d="M12.500 1.500v11L7 8.500H1.500v-3H7z" /></Ico>
              <span>Filters</span>
            </FiltersPane>
          </StageTop>
          <PageBar>
            <ViewMode $on aria-label="Desktop layout"><Ico w={20} h={16} stroke="#484644"><path d="M1.500 1.500h17v10h-17zM10 11.500v3M6 14.500h8" strokeWidth="1.500" /></Ico></ViewMode>
            <ViewMode aria-label="Mobile layout"><Ico w={14} h={20} stroke="#484644"><rect x="1.500" y=".5" width="11" height="19" rx="1" strokeWidth="1.500" /><path d="M6 16.500h2" /></Ico></ViewMode>
            <Arrow aria-label="Previous page" />
            <Arrow $next aria-label="Next page" />
            <PageTab>Page 1</PageTab>
            <PageTab $on>Page 2</PageTab>
            <AddPage aria-label="New page"><Plus size={15} strokeWidth={4} /></AddPage>
          </PageBar>
        </Stage>

        <Pane>
          <PaneHead><h2>Build</h2><DotsIcon /><ChevronsRight size={22} strokeWidth={1.200} /></PaneHead>
          <PaneLabel>Suggestions</PaneLabel>
          <Shelf>{buildGallery.map(n => <IconButton key={n} aria-label={n}><VizIcon name={n} /></IconButton>)}</Shelf>
          <PaneLabel>Data</PaneLabel>
          <DropZone><AddData>+Add data</AddData></DropZone>
        </Pane>

        <Pane>
          <PaneHead><h2>Data</h2><DotsIcon /><ChevronsRight size={22} strokeWidth={1.200} /></PaneHead>
          <PaneSearch><Search size={15} strokeWidth={1.500} /><input placeholder="Search" aria-label="Search fields" /></PaneSearch>
          <Tree>
            {['Sorting Table', 'Table1', 'Table1 (2)'].map(t => (
              <TreeItem key={t}><button><ChevronRight size={20} strokeWidth={1.200} /><TableIcon />{t}</button></TreeItem>
            ))}
            <TreeItem><button><ChevronRight size={20} strokeWidth={1.200} /><TableIcon /><bdi>ترتيب الارباع</bdi></button></TreeItem>
          </Tree>
        </Pane>

        <RightRail>
          <PaneSwitch $on aria-label="Data pane"><Ico w={16} h={18}><path d="M1.500 3.500v11c0 3 13 3 13 0v-11c0-3-13-3-13 0c0 3 13 3 13 0" fill="#fff" /></Ico></PaneSwitch>
          <PaneSwitch $on aria-label="Build pane"><Ico w={20}><path d="M1.500 7.500h5v10h-5zM6.500 1.500h5v16h-5zM11.500 5.500h3v4" fill="#fff" /><path d="M9.500 9.500v8c0 1.500 8 1.500 8 0v-8c0-2-8-2-8 0c0 1.500 8 1.500 8 0" fill="#fdebd0" stroke={ORANGE} strokeWidth="1.500" /></Ico></PaneSwitch>
          <PaneSwitch aria-label="Format pane"><Ico w={20}><path d="M7 13.500H1.500v-7h5M6.500 13V1.500h5V10M11.500 5.500h3V8" /><path d="M18.500 6.500l-7 9c-1 2-4 3-7 2 2-1 2-4 4-5l8-7z" fill={SKY} stroke={BLUE} /></Ico></PaneSwitch>
          <PaneSwitch aria-label="More panes"><Ico w={18}><path d="M8.500 0v17M0 8.500h17" stroke="#000" /></Ico></PaneSwitch>
          <PaneSwitch $end aria-label="Settings"><Ico w={20}><path d="M8 1h4l.7 2.700 2.300 1.300 2.700-.8 2 3.500-2 2v2.600l2 2-2 3.500-2.700-.8-2.300 1.300L12 19H8l-.7-2.700L5 15l-2.700.8-2-3.500 2-2V9.700l-2-2 2-3.500L5 5l2.300-1.300z" strokeWidth="1.500" /><circle cx="10" cy="10" r="3" strokeWidth="1.500" /></Ico></PaneSwitch>
        </RightRail>
      </Work>

      <Status>
        <span>Page 2 of 2</span>
        <Zoom>
          <b>-</b>
          <input type="range" min="0" max="100" defaultValue="32" aria-label="Zoom" />
          <Plus size={12} strokeWidth={2} />
          <output>69%</output>
          <Ico w={16} h={12} stroke="#605e5c"><path d="M.5.5h15v11H.5zM3 4.500v-2h2M11 2.500h2v2M13 7.500v2h-2M5 9.500H3v-2" /></Ico>
        </Zoom>
      </Status>

      <TaskBar>
        {tasks.map(t => <Task key={t.name} $w={t.w} $on={t.on} aria-label={t.name}><span>{t.art}</span></Task>)}
        <Tray>
          <Ico w={10} h={6} stroke="none"><path d="M0 6l5-5 5 5z" fill="#fff" /></Ico>
          <Ico w={18} stroke="#555"><path d="M2.500 1v16M3 2h6l1 2h6v7H9L8 9H3z" fill="#fff" /><circle cx="12" cy="12" r="5" fill="#d0342c" stroke="#fff" /><path d="M10 10l4 4M14 10l-4 4" stroke="#fff" strokeWidth="1.500" /></Ico>
          <Ico w={16} stroke="#6d5a30"><path d="M.5 11.500h3v3h-3zM3.500 9.500h3v5h-3zM6.500 7.500h3v7h-3zM9.500 5.500h3v9h-3z" fill="#fff" /><path d="M12.500 3.500h3v11h-3z" fill="#b9ab88" /></Ico>
          <Ico w={18} stroke="#fff"><path d="M1 6h4l4-4v14l-4-4H1z" fill="#fff" /><path d="M11 6q2 3 0 6M13 4q4 5 0 10" /></Ico>
          <Lang>ع</Lang>
          <Clock>08:39<br />22/09/2025</Clock>
        </Tray>
      </TaskBar>

      <Activation><p>Activate Windows</p><p>Go to PC settings to activate Windows.</p></Activation>
      <Watermark><bdi>مستقل</bdi><span>mostaql.com</span></Watermark>
    </Shell>
  );
}
